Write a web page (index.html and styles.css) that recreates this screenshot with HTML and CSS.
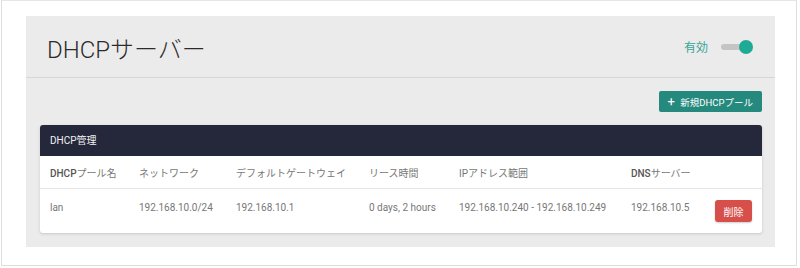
FILE: index.html
```html
<!DOCTYPE html>
<html lang="ja">

<head>
    <meta charset="UTF-8" />
    <meta name="viewport" content="width=device-width, initial-scale=1.0" />
    <title>DHCPサーバー</title>
    <link rel="stylesheet" href="styles.css">
</head>

<body>
    <div class="frame">
        <div class="panel">
            <div class="panel-header">
                <div class="headline">DHCPサーバー</div>
                <div class="status">
                    <span class="status-label">有効</span>
                    <svg class="switch" width="33" height="16" viewBox="0 0 33 16">
                        <rect x="0" y="5" width="28" height="6" rx="3" fill="#c4c4c4" />
                        <circle cx="25" cy="8" r="7" fill="#1eaa95" />
                    </svg>
                </div>
            </div>

            <div class="panel-body">
                <div class="actions">
                    <button class="add-button"><span class="plus">+</span> 新規DHCPプール</button>
                </div>

                <div class="card">
                    <div class="card-title">DHCP管理</div>
                    <table class="pool-table">
                        <colgroup>
                            <col class="col-name">
                            <col class="col-network">
                            <col class="col-gateway">
                            <col class="col-lease">
                            <col class="col-range">
                            <col class="col-dns">
                            <col class="col-action">
                        </colgroup>
                        <tr>
                            <th><b>DHCP</b>プール名</th>
                            <th>ネットワーク</th>
                            <th>デフォルトゲートウェイ</th>
                            <th>リース時間</th>
                            <th>IPアドレス範囲</th>
                            <th><b>DNS</b>サーバー</th>
                            <th></th>
                        </tr>
                        <tr>
                            <td>lan</td>
                            <td>192.168.10.0/24</td>
                            <td>192.168.10.1</td>
                            <td>0 days, 2 hours</td>
                            <td>192.168.10.240 - 192.168.10.249</td>
                            <td>192.168.10.5</td>
                            <td><button class="delete-button">削除</button></td>
                        </tr>
                    </table>
                </div>
            </div>
        </div>
    </div>
</body>

</html>
```

FILE: styles.css
```css
html,
body {
    margin: 0;
    padding: 0;
    font-family: Roboto, "Noto Sans CJK JP", sans-serif;
    background-color: #fff;
    color: #333;
}

.frame {
    width: 749px;
    margin-left: 1px;
    padding: 15px 21px 18px 24px;
    border: 1px solid #dedede;
    border-top-color: #e6e6e6;
}

.panel {
    background-color: #ebebeb;
}

.panel-header {
    display: flex;
    justify-content: space-between;
    align-items: center;
    height: 61px;
    padding: 0 21px;
    border-bottom: 1px solid #d6d6d6;
}

.headline {
    font-size: 24px;
    font-weight: 300;
    color: #2b2b2b;
    margin-top: 2px;
}

.status {
    display: flex;
    align-items: center;
    gap: 13px;
}

.status-label {
    font-size: 12px;
    color: #36a596;
}

.switch {
    display: block;
}

.panel-body {
    padding: 13px 13px 14px 14px;
}

.actions {
    display: flex;
    justify-content: flex-end;
    margin-bottom: 13px;
}

.add-button {
    height: 21px;
    padding: 0 9px;
    border: none;
    border-radius: 2px;
    background-color: #25897e;
    color: #fff;
    font-family: Roboto, "Noto Sans CJK JP", sans-serif;
    font-size: 9.5px;
    cursor: pointer;
}

.plus {
    font-size: 13px;
    margin-right: 3px;
}

.card {
    background-color: #fff;
    border-radius: 3px;
    overflow: hidden;
    box-shadow: 0 1px 3px rgba(0, 0, 0, 0.15);
}

.card-title {
    height: 31px;
    line-height: 31px;
    padding-left: 10px;
    background-color: #25283b;
    color: #f2f2f2;
    font-size: 10px;
}

.pool-table {
    width: 100%;
    border-collapse: collapse;
    table-layout: fixed;
}

.col-name { width: 89px; }
.col-network { width: 97px; }
.col-gateway { width: 133px; }
.col-lease { width: 90px; }
.col-range { width: 172px; }
.col-dns { width: 84px; }
.col-action { width: 57px; }

th {
    height: 32px;
    padding: 0 10px;
    text-align: left;
    font-size: 10px;
    font-weight: normal;
    color: #777;
    border-bottom: 1px solid #e6e6e6;
    white-space: nowrap;
}

th b {
    font-weight: 500;
    color: #555;
}

td {
    height: 22px;
    padding: 11px 10px;
    vertical-align: top;
    font-size: 10px;
    color: #777;
    line-height: 16px;
    white-space: nowrap;
}

.delete-button {
    display: block;
    width: 37px;
    height: 22px;
    padding: 0;
    border: none;
    border-radius: 3px;
    background-color: #d64f4b;
    color: #fff;
    font-family: Roboto, "Noto Sans CJK JP", sans-serif;
    font-size: 10px;
    cursor: pointer;
    box-shadow: 0 1px 2px rgba(0, 0, 0, 0.2);
}
```
